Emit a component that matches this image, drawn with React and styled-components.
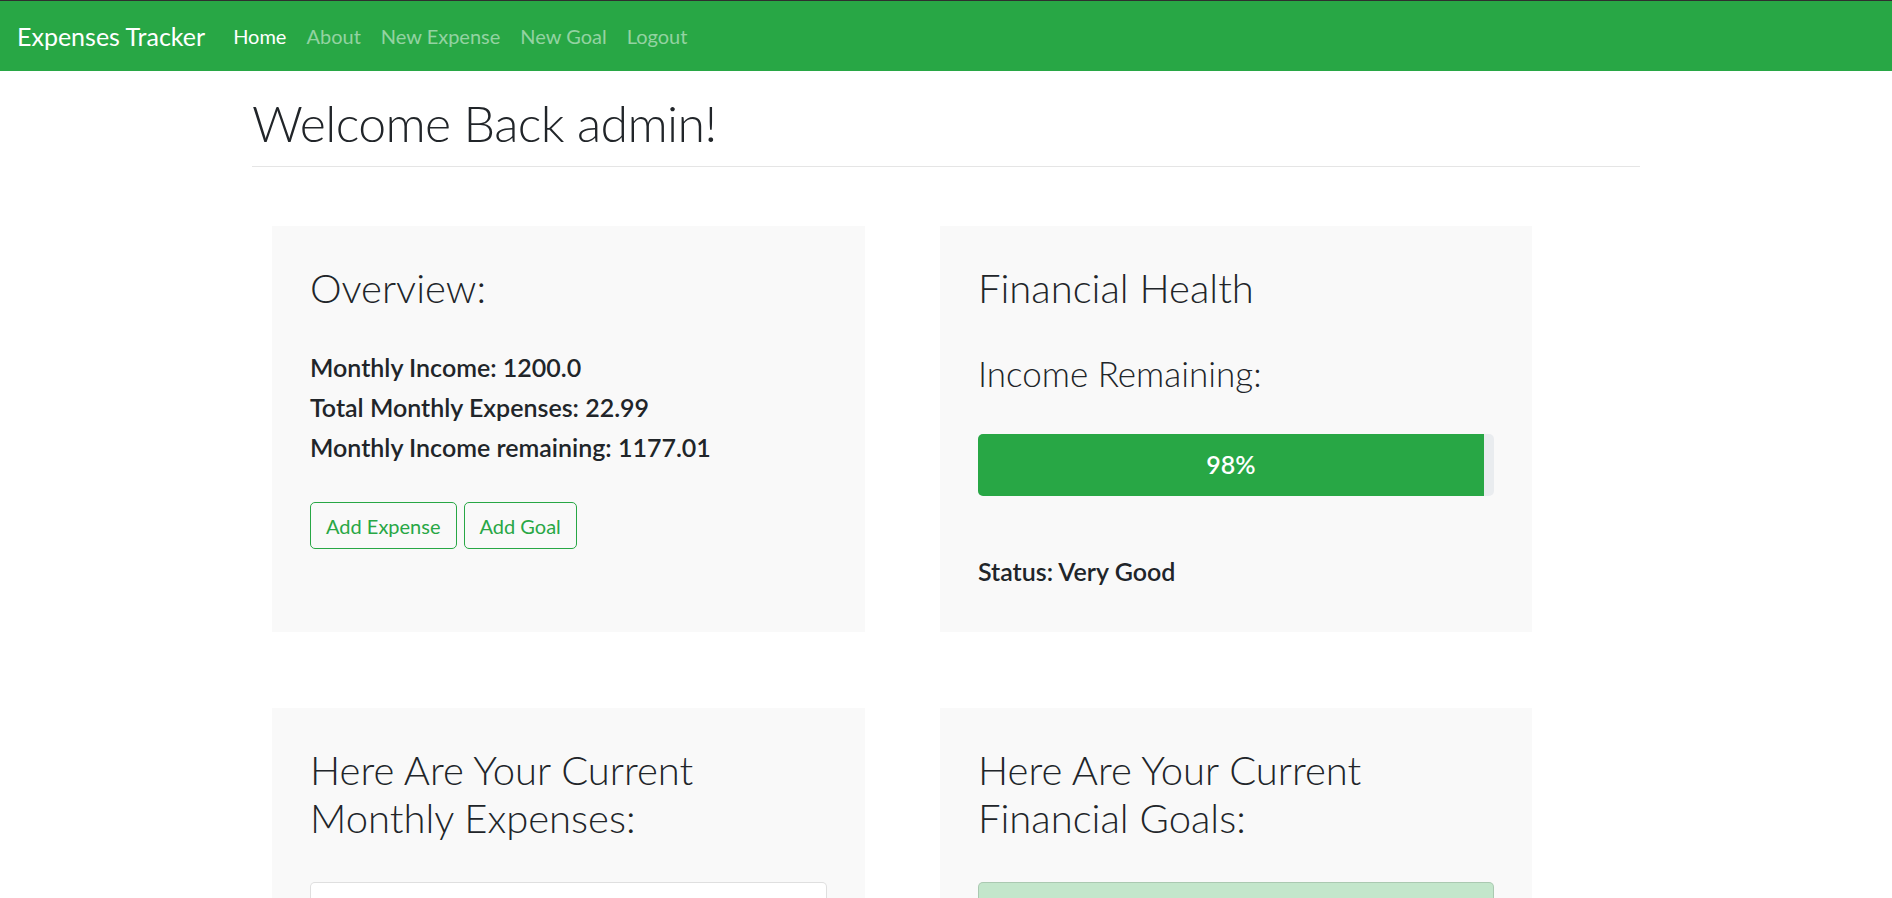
import React from 'react';
import styled, { createGlobalStyle } from 'styled-components';

const GlobalStyle = createGlobalStyle`
  html, body {
    margin: 0;
    padding: 0;
    background: #fff;
  }
  body {
    font-family: Lato, "Open Sans", "Liberation Sans", sans-serif;
    font-size: 20px;
    line-height: 1.5;
    color: #212529;
  }
  * {
    box-sizing: border-box;
  }
`;

const Navbar = styled.nav`
  display: flex;
  align-items: center;
  height: 71px;
  padding: 0 17px;
  background: #28a745;
  border-top: 1px solid #2f2f2f;
`;

const Brand = styled.a`
  font-size: 25px;
  line-height: 37px;
  color: #fff;
  margin-right: 18px;
  text-decoration: none;
`;

const NavLinks = styled.ul`
  display: flex;
  list-style: none;
  margin: 0;
  padding: 0;
`;

const NavLink = styled.a`
  display: block;
  padding: 10px;
  font-size: 20px;
  line-height: 30px;
  text-decoration: none;
  color: ${p => (p.$active ? '#fff' : 'rgba(255, 255, 255, 0.5)')};
`;

const Container = styled.main`
  width: 1388px;
  margin: 0 auto;
`;

const Title = styled.h1`
  margin: 22px 0 13px;
  font-size: 50px;
  font-weight: 300;
  letter-spacing: -0.6px;
  line-height: 1.2;
`;

const Divider = styled.hr`
  margin: 0;
  border: 0;
  border-top: 1px solid #e5e5e5;
`;

const CardGrid = styled.section`
  display: grid;
  grid-template-columns: 593px 592px;
  column-gap: 75px;
  row-gap: 76px;
  padding: 59px 0 0 20px;
`;

const Card = styled.div`
  background: #f9f9f9;
  padding: 38px 38px 36px;
`;

const CardTitle = styled.h2`
  margin: 0 0 40px;
  font-size: 40px;
  font-weight: 300;
  line-height: 1.2;
`;

const SubTitle = styled.h3`
  margin: 0 0 40px;
  font-size: 35px;
  font-weight: 300;
  line-height: 1.2;
`;

const Stat = styled.h5`
  margin: 0 0 10px;
  font-size: 25px;
  font-weight: 600;
  line-height: 1.2;
`;

const ButtonRow = styled.div`
  display: flex;
  gap: 7px;
  margin-top: 40px;
`;

const OutlineButton = styled.a`
  display: inline-block;
  padding: 7.5px 15px;
  font-size: 20px;
  line-height: 1.5;
  color: #28a745;
  border: 1px solid #28a745;
  border-radius: 5px;
  text-decoration: none;
`;

const Progress = styled.div`
  height: 62px;
  margin-bottom: 60px;
  background: #e9ecef;
  border-radius: 5px;
  overflow: hidden;
  display: flex;
`;

const ProgressBar = styled.div`
  display: flex;
  align-items: center;
  justify-content: center;
  background: #28a745;
  color: #fff;
  font-size: 25px;
  font-weight: 600;
`;

const ListItem = styled.div`
  margin-top: 8px;
  padding: 15px 25px;
  border: 1px solid rgba(0, 0, 0, 0.125);
  border-radius: 5px;
  background: ${p => (p.$success ? '#c3e6cb' : '#fff')};
  color: ${p => (p.$success ? '#155724' : '#212529')};
`;

const App = () => {
  const income = 1200.0;
  const expenses = 22.99;
  const percent = Math.round(((income - expenses) / income) * 100);

  return (
    <>
      <GlobalStyle />
      <Navbar>
        <Brand href="#">Expenses Tracker</Brand>
        <NavLinks>
          <li><NavLink href="#" $active>Home</NavLink></li>
          <li><NavLink href="#">About</NavLink></li>
          <li><NavLink href="#">New Expense</NavLink></li>
          <li><NavLink href="#">New Goal</NavLink></li>
          <li><NavLink href="#">Logout</NavLink></li>
        </NavLinks>
      </Navbar>
      <Container>
        <Title>Welcome Back admin!</Title>
        <Divider />
        <CardGrid>
          <Card>
            <CardTitle>Overview:</CardTitle>
            <Stat>Monthly Income: 1200.0</Stat>
            <Stat>Total Monthly Expenses: 22.99</Stat>
            <Stat>Monthly Income remaining: 1177.01</Stat>
            <ButtonRow>
              <OutlineButton href="#">Add Expense</OutlineButton>
              <OutlineButton href="#">Add Goal</OutlineButton>
            </ButtonRow>
          </Card>
          <Card>
            <CardTitle>Financial Health</CardTitle>
            <SubTitle>Income Remaining:</SubTitle>
            <Progress>
              <ProgressBar style={{ width: `${percent}%` }}>{percent}%</ProgressBar>
            </Progress>
            <Stat>Status: Very Good</Stat>
          </Card>
          <Card>
            <CardTitle>Here Are Your Current<br />Monthly Expenses:</CardTitle>
            <ListItem>Netflix: 22.99</ListItem>
          </Card>
          <Card>
            <CardTitle>Here Are Your Current<br />Financial Goals:</CardTitle>
            <ListItem $success>Save for a vacation</ListItem>
          </Card>
        </CardGrid>
      </Container>
    </>
  );
};

export default App;
